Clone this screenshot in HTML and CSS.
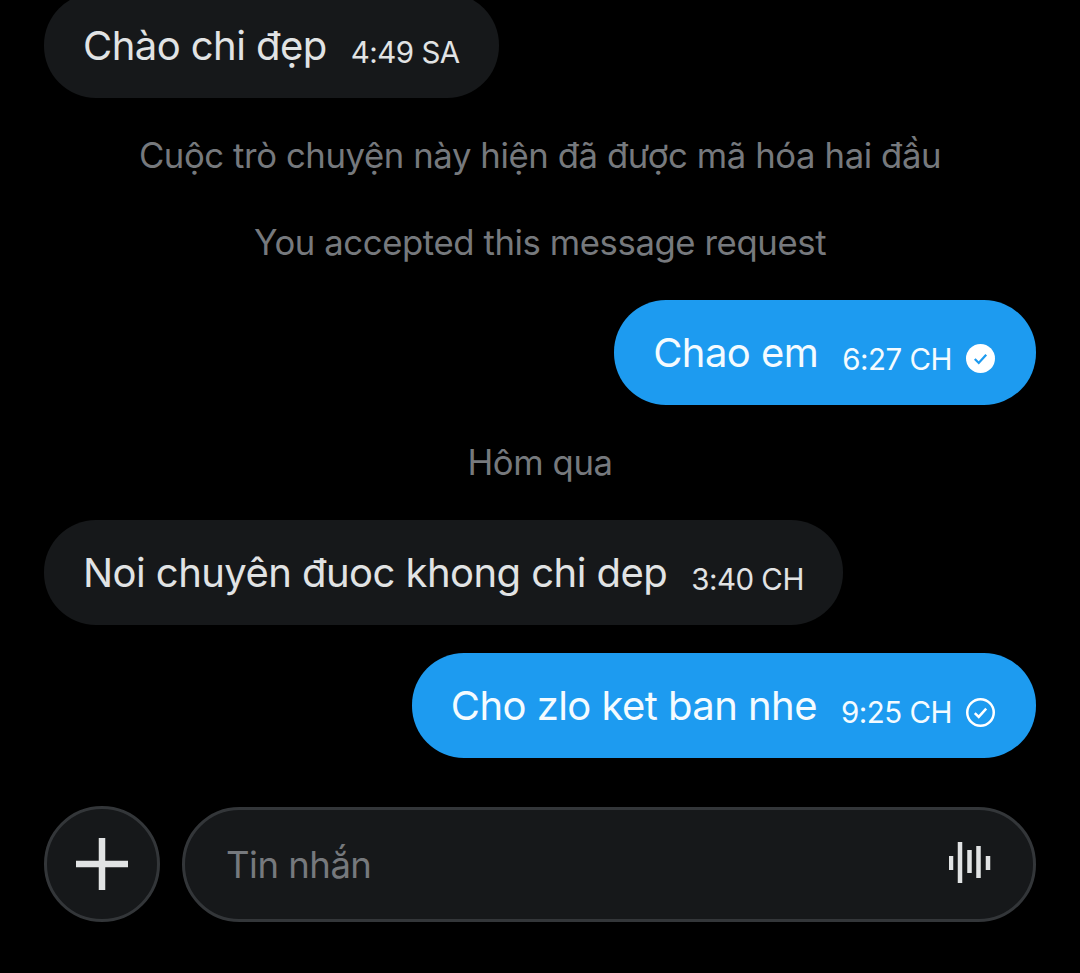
FILE: index.html
```html
<!DOCTYPE html>
<html lang="vi">
<head>
<meta charset="UTF-8">
<title>Tin nhắn</title>
<link rel="stylesheet" href="styles.css">
</head>
<body>

<div class="chat">
  <div class="bubble nhan b-dau">
    <span class="noidung">Chào chi đẹp</span>
    <span class="gio">4:49 SA</span>
  </div>

  <p class="thongbao tb-1">Cuộc trò chuyện này hiện đã được mã hóa hai đầu</p>
  <p class="thongbao tb-2">You accepted this message request</p>

  <div class="bubble gui b-2">
    <span class="noidung">Chao em</span>
    <span class="gio">6:27 CH</span>
    <svg class="tick" viewBox="0 0 28 28">
      <circle cx="14" cy="14" r="14" fill="#fff"/>
      <path d="M8.5 14.5l3.8 3.8 7.2-8" fill="none" stroke="#1d9bf0" stroke-width="2.2"/>
    </svg>
  </div>

  <p class="thongbao tb-3">Hôm qua</p>

  <div class="bubble nhan b-3">
    <span class="noidung">Noi chuyên đuoc khong chi dep</span>
    <span class="gio">3:40 CH</span>
  </div>

  <div class="bubble gui b-4">
    <span class="noidung">Cho zlo ket ban nhe</span>
    <span class="gio">9:25 CH</span>
    <svg class="tick tick-vien" viewBox="0 0 28 28">
      <circle cx="14" cy="14" r="12.8" fill="none" stroke="#fff" stroke-width="2.4"/>
      <path d="M8.5 14.5l3.8 3.8 7.2-8" fill="none" stroke="#fff" stroke-width="2.4"/>
    </svg>
  </div>
</div>

<div class="khung-nhap">
  <div class="nut-them">
    <svg viewBox="0 0 52 52" width="52" height="52">
      <path d="M26 0v52M0 26h52" stroke="#e1e3e4" stroke-width="6.500" fill="none"/>
    </svg>
  </div>
  <div class="o-nhap">
    <span class="goi-y">Tin nhắn</span>
    <svg class="song" viewBox="0 0 42 42" width="42" height="42">
      <path d="M2 14v14M11 0v41M20.500 8v23M29.500 4v32M39 14v14" stroke="#e1e3e4" stroke-width="4.500" fill="none"/>
    </svg>
  </div>
</div>

</body>
</html>
```

FILE: styles.css
```css
html, body {
  height: 100%;
}
body {
  font-family: Inter, "Liberation Sans", sans-serif;
  background-color: #000;
  margin: 0;
  overflow: hidden;
}
.chat {
  display: flex;
  flex-direction: column;
  margin-top: -7px;
  padding: 0 44px;
}
.bubble {
  display: flex;
  align-items: center;
  height: 105px;
  padding: 0 39px;
  border-radius: 52px;
  box-sizing: border-box;
  width: fit-content;
}
.nhan {
  background-color: #16181a;
  color: #e1e3e4;
}
.gui {
  background-color: #1d9bf0;
  color: #f4fbff;
  align-self: flex-end;
  padding-right: 41px;
}
.noidung {
  font-size: 40px;
  letter-spacing: -0.55px;
}
.gio {
  font-size: 29.5px;
  letter-spacing: -0.5px;
  margin-left: 24px;
  margin-top: 12px;
}
.tick {
  width: 29px;
  height: 29px;
  margin-left: 14px;
  margin-top: 12px;
}
.tick-vien {
  margin-top: 14px;
}
.thongbao {
  color: #76797d;
  font-size: 34.7px;
  letter-spacing: -0.4px;
  line-height: 40px;
  text-align: center;
  margin: 0;
}
.tb-1 { margin-top: 37px; }
.tb-2 { margin-top: 47px; }
.b-2 { margin-top: 38px; }
.tb-3 { margin-top: 37px; }
.b-3 { margin-top: 38px; }
.b-4 { margin-top: 28px; }
.khung-nhap {
  display: flex;
  align-items: center;
  gap: 22px;
  padding: 0 44px;
  margin-top: 48px;
}
.nut-them {
  display: flex;
  align-items: center;
  justify-content: center;
  flex: none;
  width: 116px;
  height: 116px;
  border: 3px solid #333639;
  border-radius: 50%;
  background-color: #16181a;
  box-sizing: border-box;
}
.o-nhap {
  display: flex;
  align-items: center;
  justify-content: space-between;
  flex: 1;
  height: 115px;
  padding: 0 42px;
  border: 3px solid #333639;
  border-radius: 58px;
  background-color: #16181a;
  box-sizing: border-box;
}
.goi-y {
  color: #76797d;
  font-size: 36.5px;
  letter-spacing: -0.5px;
  margin-left: -1px;
  margin-top: 2px;
}
.song {
  margin-bottom: 2px;
}
```
